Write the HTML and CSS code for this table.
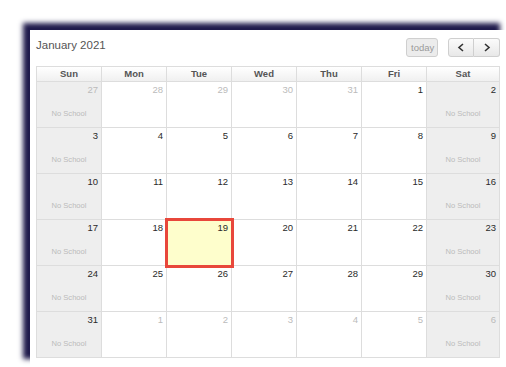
FILE: index.html
```html
<!DOCTYPE html>
<html lang="en">
<head>
    <meta charset="UTF-8">
    <title>School Calendar</title>
    <link rel="stylesheet" href="styles.css">
</head>
<body>
<div class="frame">
    <div class="toolbar">
        <h2 class="title">January 2021</h2>
        <div class="actions">
            <button class="btn btn-today" disabled>today</button>
            <div class="btn-group">
                <button class="btn btn-nav" aria-label="prev">
                    <svg width="8" height="9" viewBox="0 0 8 9"><path d="M6 1 L2 4.5 L6 8" fill="none" stroke="#333" stroke-width="1.6"/></svg>
                </button>
                <button class="btn btn-nav" aria-label="next">
                    <svg width="8" height="9" viewBox="0 0 8 9"><path d="M2 1 L6 4.5 L2 8" fill="none" stroke="#333" stroke-width="1.6"/></svg>
                </button>
            </div>
        </div>
    </div>

    <div class="month" id="month"></div>
</div>

<script>
    const diasSemana = ['Sun', 'Mon', 'Tue', 'Wed', 'Thu', 'Fri', 'Sat'];
    const month = document.getElementById('month');

    diasSemana.forEach(d => {
        const th = document.createElement('div');
        th.className = 'head';
        th.textContent = d;
        month.appendChild(th);
    });

    // January 2021 starts on a Friday; grid begins Sun Dec 27
    const inicio = new Date(2021, 0, 1 - 5);
    for (let i = 0; i < 42; i++) {
        const data = new Date(inicio);
        data.setDate(inicio.getDate() + i);
        const cell = document.createElement('div');
        cell.className = 'day';
        const fds = data.getDay() === 0 || data.getDay() === 6;
        if (fds) cell.classList.add('weekend');
        if (data.getMonth() !== 0) cell.classList.add('other');
        if (data.getMonth() === 0 && data.getDate() === 19) cell.classList.add('today');

        cell.innerHTML = `<span class="num">${data.getDate()}</span>` +
            (fds ? '<span class="event">No School</span>' : '');
        month.appendChild(cell);
    }
</script>
</body>
</html>
```

FILE: styles.css
```css
:root {
    --line: #dddddd;
    --text: #2a2a2a;
    --muted: #bbbbbb;
    --weekend: #eeeeee;
    --today-bg: #fefecc;
    --today-border: #e8473b;
    --shadow: #1f1a4b;
}

* {
    box-sizing: border-box;
}

body {
    margin: 0;
    background: #ffffff;
    font-family: 'Liberation Sans', Arial, sans-serif;
    color: var(--text);
    overflow: hidden;
}

.frame {
    margin: 30px 0 0 30px;
    width: 477px;
    height: 336px;
    padding: 8px 6px 0 6px;
    background: #ffffff;
    box-shadow: -7px -7px 5px var(--shadow);
}

.toolbar {
    display: flex;
    justify-content: space-between;
    align-items: flex-start;
    width: 464px;
    height: 28px;
}

.title {
    margin: 1px 0 0 0;
    font-size: 11.5px;
    font-weight: normal;
    color: #555555;
}

.actions {
    display: flex;
    gap: 10px;
}

.btn {
    height: 19px;
    border: 1px solid #cfcfcf;
    border-radius: 3px;
    background: linear-gradient(#fbfbfb, #e8e8e8);
    font-family: inherit;
    font-size: 9.5px;
    padding: 0 4px;
    margin: 0;
}

.btn-today {
    color: #9a9a9a;
    width: 32px;
    background: #ececec;
}

.btn-group {
    display: flex;
}

.btn-nav {
    width: 26px;
    display: flex;
    align-items: center;
    justify-content: center;
}

.btn-nav:first-child {
    border-radius: 3px 0 0 3px;
}

.btn-nav:last-child {
    border-radius: 0 3px 3px 0;
    border-left: none;
}

.month {
    display: grid;
    grid-template-columns: repeat(6, 65px) 73px;
    grid-template-rows: 15px repeat(6, 46px);
    width: 464px;
    border-left: 1px solid var(--line);
    border-top: 1px solid var(--line);
}

.head {
    border-right: 1px solid var(--line);
    border-bottom: 1px solid var(--line);
    background: linear-gradient(#ffffff, #f0f0f0);
    text-align: center;
    font-size: 9.5px;
    font-weight: bold;
    color: #555555;
    line-height: 14px;
}

.day {
    position: relative;
    display: flex;
    flex-direction: column;
    border-right: 1px solid var(--line);
    border-bottom: 1px solid var(--line);
    padding: 2px 3px 9px 3px;
}

.day.weekend {
    background: var(--weekend);
}

.num {
    text-align: right;
    font-size: 9.5px;
    line-height: 12px;
}

.other .num {
    color: var(--muted);
}

.event {
    margin-top: auto;
    text-align: center;
    font-size: 7.6px;
    color: var(--muted);
}

.day.today {
    background: var(--today-bg);
    outline: 3px solid var(--today-border);
    outline-offset: -1px;
    z-index: 1;
}
```
